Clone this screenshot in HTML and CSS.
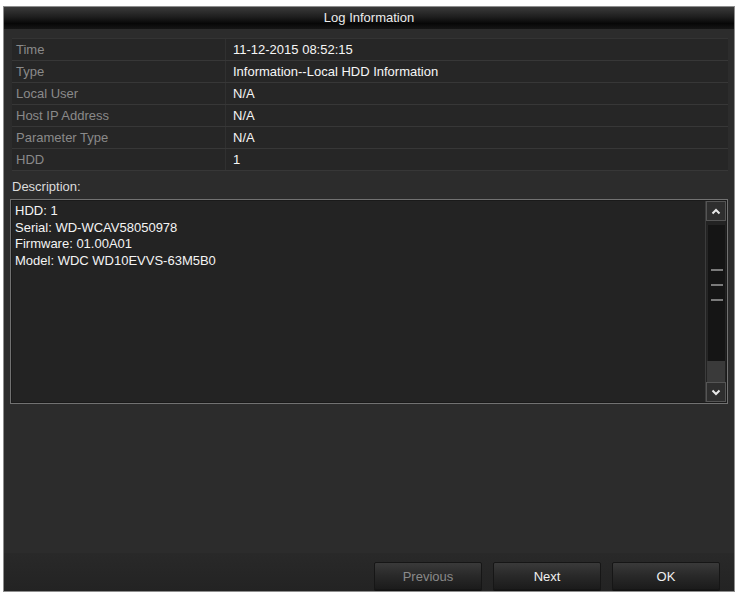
FILE: index.html
```html
<!DOCTYPE html>
<html>
<head>
<meta charset="utf-8">
<link rel="stylesheet" href="styles.css">
</head>
<body>
<div class="dialog">
  <div class="titlebar">Log Information</div>
  <div class="content">
    <div class="table">
      <div class="row"><div class="label">Time</div><div class="value">11-12-2015 08:52:15</div></div>
      <div class="row"><div class="label">Type</div><div class="value">Information--Local HDD Information</div></div>
      <div class="row"><div class="label">Local User</div><div class="value">N/A</div></div>
      <div class="row"><div class="label">Host IP Address</div><div class="value">N/A</div></div>
      <div class="row"><div class="label">Parameter Type</div><div class="value">N/A</div></div>
      <div class="row"><div class="label">HDD</div><div class="value">1</div></div>
    </div>
    <div class="desc-label">Description:</div>
    <div class="desc-box">
      <div class="desc-text">
        <div>HDD: 1</div>
        <div>Serial: WD-WCAV58050978</div>
        <div>Firmware: 01.00A01</div>
        <div>Model: WDC WD10EVVS-63M5B0</div>
      </div>
      <div class="scrollbar">
        <div class="sb-btn">
          <svg width="10" height="7" viewBox="0 0 10 7"><path d="M1.5 5.5 L5 2 L8.5 5.5" fill="none" stroke="#e8e8e8" stroke-width="2"/></svg>
        </div>
        <div class="sb-thumb">
          <span class="grip"></span><span class="grip"></span><span class="grip"></span>
        </div>
        <div class="sb-track"></div>
        <div class="sb-btn">
          <svg width="10" height="7" viewBox="0 0 10 7"><path d="M1.5 1.5 L5 5 L8.5 1.5" fill="none" stroke="#e8e8e8" stroke-width="2"/></svg>
        </div>
      </div>
    </div>
  </div>
  <div class="footer">
    <button class="btn disabled">Previous</button>
    <button class="btn">Next</button>
    <button class="btn">OK</button>
  </div>
</div>
</body>
</html>
```
FILE: styles.css
```css
html, body {
  margin: 0;
  padding: 0;
  background: #ffffff;
}
body {
  font-family: "Liberation Sans", Arial, sans-serif;
  font-size: 13px;
}
.dialog {
  margin: 6px 0 0 3px;
  width: 730px;
  height: 584px;
  border: 1px solid #8e8e8e;
  background: #2c2c2c;
  display: flex;
  flex-direction: column;
}
.titlebar {
  height: 22px;
  line-height: 21px;
  text-align: center;
  color: #ececec;
  font-size: 13px;
  background: linear-gradient(#3a3a3a 0%, #1e1e1e 45%, #070707 75%, #151515 100%);
}
.content {
  flex: 1;
  padding: 9px 6px 0 8px;
  display: flex;
  flex-direction: column;
}
.table {
  border-top: 1px solid #343434;
}
.row {
  display: flex;
  height: 21px;
  border-bottom: 1px solid #373737;
  background: #262626;
}
.label {
  width: 209px;
  padding-left: 4px;
  line-height: 21px;
  color: #8a8a8a;
  border-right: 1px solid #303030;
}
.value {
  padding-left: 7px;
  line-height: 21px;
  color: #f6f6f6;
}
.desc-label {
  height: 24px;
  line-height: 24px;
  margin-top: 4px;
  color: #dcdcdc;
}
.desc-box {
  height: 203px;
  margin-left: -2px;
  border: 1px solid #727272;
  background: #232323;
  display: flex;
  box-shadow: inset 0 0 0 1px #1a1a1a;
}
.desc-text {
  flex: 1;
  padding: 3px 0 0 4px;
  color: #f4f4f4;
  line-height: 16.5px;
}
.scrollbar {
  width: 20px;
  margin: 1px 1px 1px 0;
  display: flex;
  flex-direction: column;
  border-left: 1px solid #3c3c3c;
}
.sb-btn {
  height: 20px;
  background: #2e2e2e;
  border: 1px solid #555555;
  box-sizing: border-box;
  display: flex;
  align-items: center;
  justify-content: center;
}
.sb-thumb {
  height: 136px;
  margin: 4px 1px 0 1px;
  background: #151515;
  border-left: 1px solid #262626;
  display: flex;
  flex-direction: column;
  align-items: center;
  justify-content: center;
  gap: 13px;
  padding-bottom: 16px;
  box-sizing: border-box;
}
.grip {
  display: block;
  width: 12px;
  height: 2px;
  background: #7a7a7a;
}
.sb-track {
  flex: 1;
  background: #3a3a3a;
  margin: 0 1px;
}
.footer {
  height: 38px;
  background: linear-gradient(#292929, #232323);
  display: flex;
  justify-content: flex-end;
  align-items: flex-start;
  gap: 11px;
  padding: 9px 14px 0 0;
  box-sizing: border-box;
}
.btn {
  width: 108px;
  height: 28px;
  border: 1px solid #161616;
  border-radius: 2px;
  background: linear-gradient(#3a3a3a 0%, #2a2a2a 45%, #1b1b1b 100%);
  color: #f0f0f0;
  font-family: "Liberation Sans", Arial, sans-serif;
  font-size: 13px;
  box-shadow: 0 1px 0 #111;
}
.btn.disabled {
  color: #8a8a8a;
}
```
